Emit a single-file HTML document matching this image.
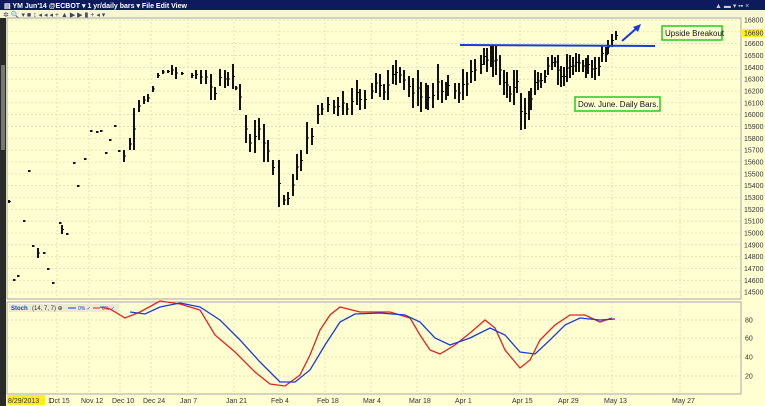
<!DOCTYPE html>
<html><head><meta charset="utf-8"><style>
body{margin:0;width:765px;height:406px;overflow:hidden;background:#ffffd2;font-family:"Liberation Sans",sans-serif;}
svg{display:block}
</style></head><body>
<svg id="s" width="765" height="406" xmlns="http://www.w3.org/2000/svg" font-family="Liberation Sans, sans-serif">
<rect width="765" height="406" fill="#ffffd2"/>
<rect x="0" y="0" width="765" height="10" fill="#0d1a5c"/>
<text x="4" y="8" font-size="7" fill="#fff" font-weight="bold">▤  YM Jun'14 @ECBOT ▾   1 yr/daily bars ▾   File   Edit   View</text>
<text x="715" y="8" font-size="7" fill="#ccc">▲ ▬ ▾  ▪▪ ×</text>
<rect x="0" y="10" width="765" height="8" fill="#f8f4d8"/>
<text x="3" y="17" font-size="7" fill="#446">✲ 🔍 ▾ ■ ↕ ◂ ◂ ◂ + ▲ ▶ ▶ ▮ + ◂ ▾</text>
<rect x="0" y="18" width="6" height="388" fill="#2a2a2a"/>
<rect x="1" y="65" width="4" height="85" fill="#777"/>
<rect x="7" y="18" width="734" height="281" fill="#ffffd2" stroke="#aaa" stroke-width="1"/>
<rect x="7" y="302" width="734" height="92" fill="#ffffd2" stroke="#aaa" stroke-width="1"/>
<rect x="741" y="29" width="22" height="8" fill="#ffee22"/>
<rect x="7" y="395" width="38" height="10" fill="#ffee22"/>
<g id="grid" stroke="#d8d8b0" stroke-width="0.7" stroke-dasharray="2,2"></g>
<g id="bars" stroke="#111" stroke-width="2"></g>
<g id="lab" font-size="7" fill="#333"></g>
<line x1="460" y1="45" x2="655" y2="46" stroke="#1a3bdc" stroke-width="2"/>
<line x1="622" y1="41" x2="638" y2="27" stroke="#1a3bdc" stroke-width="2"/>
<polygon points="641,24 633,27 638,32" fill="#1a3bdc"/>
<rect x="662" y="26" width="60" height="14" fill="#ffffd2" stroke="#22cc22" stroke-width="1.5"/>
<text x="665" y="36" font-size="8" fill="#111">Upside Breakout</text>
<rect x="575" y="97" width="85" height="14" fill="#ffffd2" stroke="#22cc22" stroke-width="1.5"/>
<text x="578" y="107" font-size="8" fill="#111">Dow. June. Daily Bars.</text>
<rect x="9" y="304" width="110" height="8" fill="#ecebd0"/>
<text x="11" y="310" font-size="6" fill="#1a3bdc" font-weight="bold">Stoch</text>
<text x="32" y="310" font-size="6" fill="#333">(14, 7, 7) ⊕</text>
<line x1="68" y1="308" x2="76" y2="308" stroke="#1a3bdc"/><text x="78" y="310" font-size="5" fill="#1a3bdc">0% ✓</text>
<line x1="93" y1="308" x2="100" y2="308" stroke="#e52020"/><text x="102" y="310" font-size="5" fill="#1a3bdc">0% ✓</text>
<polyline fill="none" stroke="#e52020" stroke-width="1.3" points="100,307 110,309 125,318 140,312 160,301 180,304 200,310 215,335 235,352 255,372 270,384 285,386 300,375 310,355 320,330 330,315 340,307 360,312 390,312 410,318 420,335 430,350 440,354 455,345 470,333 485,320 495,328 505,350 520,368 530,360 540,340 555,325 570,315 585,315 600,322 612,318"/>
<polyline fill="none" stroke="#1a3bdc" stroke-width="1.3" points="130,312 145,314 160,307 180,303 200,307 220,320 240,340 260,362 280,382 295,382 310,370 325,345 340,322 355,314 380,313 405,315 420,322 435,338 450,345 470,338 490,328 505,335 520,352 535,354 550,340 565,325 580,318 600,320 615,319"/>
</svg>
<script>
var NS="http://www.w3.org/2000/svg",g=document.getElementById('grid'),b=document.getElementById('bars'),L=document.getElementById('lab');
function el(p,t,a,txt){var e=document.createElementNS(NS,t);for(var k in a)e.setAttribute(k,a[k]);if(txt)e.textContent=txt;p.appendChild(e);return e;}
for(var i=0;i<=23;i++){var y=20+i*11.83;el(g,'line',{x1:7,x2:741,y1:y,y2:y});if(i!=1)el(L,'text',{x:744,y:y+2.5},String(16800-i*100));}
el(L,'text',{x:744,y:35.5},'16690');
[320,338,357,376].forEach(function(y,i){el(g,'line',{x1:7,x2:741,y1:y,y2:y});el(L,'text',{x:745,y:y+2.5},String(80-i*20));});
var d=[[57,'Oct 15'],[89,'Nov 12'],[120,'Dec 10'],[151,'Dec 24'],[188,'Jan 7'],[234,'Jan 21'],[279,'Feb 4'],[325,'Feb 18'],[371,'Mar 4'],[417,'Mar 18'],[463,'Apr 1'],[520,'Apr 15'],[566,'Apr 29'],[612,'May 13'],[680,'May 27']];
d.forEach(function(a){el(g,'line',{x1:a[0],x2:a[0],y1:18,y2:394});el(L,'text',{x:a[0]-8,y:403},a[1]);});
el(L,'text',{x:8,y:403},'8/29/2013');el(L,'text',{x:48,y:403},'1');
var bars=[[9,200,203],[14,279,281],[18,275,277],[24,220,222],[29,170,172],[33,245,247],[38,248,258],[44,252,254],[48,268,270],[53,282,284],[60,222,224],[62,225,234],[67,233,235],[74,162,164],[78,185,187],[85,158,160],[91,130,132],[97,131,133],[101,130,132],[106,152,154],[110,139,141],[115,125,127],[119,150,152],[124,150,162],[130,138,150],[134,108,150],[139,100,112],[144,96,104],[148,94,102],[153,86,92],[158,73,78],[163,70,74],[168,70,73],[172,65,75],[176,67,79],[182,72,75],[192,73,78],[196,70,79],[201,70,84],[206,70,84],[211,74,100],[215,87,100],[220,69,86],[225,70,88],[228,72,86],[233,64,89],[236,86,90],[240,84,110],[246,115,143],[250,134,152],[255,120,153],[259,118,140],[264,124,162],[268,140,162],[273,160,175],[279,160,207],[284,195,205],[288,192,205],[293,174,196],[297,154,180],[301,150,171],[307,122,154],[312,128,145],[318,105,124],[322,103,115],[328,97,112],[334,100,114],[338,97,116],[343,91,115],[347,103,115],[352,88,115],[357,80,105],[360,89,110],[365,90,109],[372,83,99],[376,73,93],[380,74,97],[384,84,100],[388,70,100],[393,65,84],[396,60,85],[400,67,83],[404,70,90],[409,76,97],[413,78,108],[418,70,106],[421,82,112],[426,83,109],[428,85,110],[433,83,108],[438,64,100],[442,80,103],[446,82,100],[448,75,96],[455,83,99],[459,83,103],[463,69,100],[467,72,96],[471,60,83],[475,59,81],[481,55,74],[484,48,65],[487,48,72],[491,46,67],[493,45,77],[496,45,75],[500,55,85],[504,70,95],[507,72,98],[510,86,102],[514,70,105],[517,70,93],[521,93,130],[525,98,129],[529,91,120],[531,88,110],[535,70,95],[538,72,90],[541,73,88],[545,70,83],[548,57,75],[552,55,70],[555,57,67],[558,55,85],[561,66,87],[564,67,86],[567,54,82],[570,55,78],[573,57,75],[576,53,72],[579,54,72],[583,60,72],[586,58,78],[588,55,74],[592,60,78],[595,57,80],[599,57,76],[602,45,62],[606,47,62],[608,40,54],[612,34,47],[616,31,40]];
bars.forEach(function(a){el(b,'line',{x1:a[0],x2:a[0],y1:a[1],y2:a[2]});el(b,'line',{x1:a[0],x2:a[0]+2,y1:(a[1]+a[2])/2,y2:(a[1]+a[2])/2,'stroke-width':1});});
</script>
</body></html>
